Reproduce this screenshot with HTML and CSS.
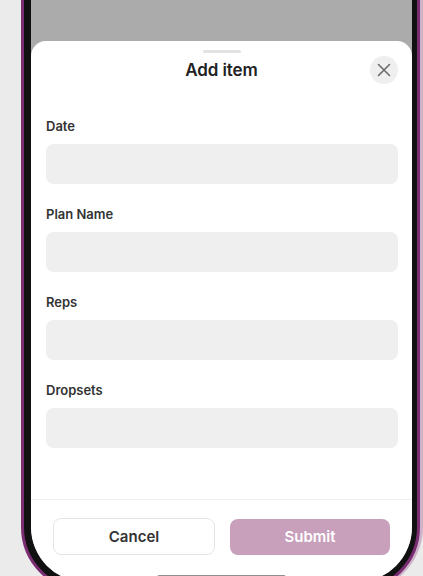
FILE: index.html
```html
<!DOCTYPE html>
<html lang="en">
<head>
	<meta charset="UTF-8">
	<title>Add item</title>
	<link rel="stylesheet" href="styles.css">
</head>
<body>
	<div class="phone">
		<div class="screen">
			<div class="sheet">
				<div class="handle"></div>
				<div class="header">
					<span class="title">Add item</span>
					<span class="close">
						<svg width="14" height="14" viewBox="0 0 14 14"><path d="M1.5 1.5L12.5 12.5M12.5 1.5L1.5 12.5" stroke="#6b6b6b" stroke-width="1.6" stroke-linecap="round" fill="none"/></svg>
					</span>
				</div>
				<div class="form">
					<div class="field"><label>Date</label><div class="input"></div></div>
					<div class="field"><label>Plan Name</label><div class="input"></div></div>
					<div class="field"><label>Reps</label><div class="input"></div></div>
					<div class="field"><label>Dropsets</label><div class="input"></div></div>
				</div>
				<div class="footer">
					<span class="btn cancel">Cancel</span>
					<span class="btn submit">Submit</span>
				</div>
			</div>
			<div class="home"></div>
		</div>
	</div>
</body>
</html>
```

FILE: styles.css
```css
html,body{margin: 0; padding: 0; height: 100%;}
body{background: #ebebeb; overflow: hidden; font-family: Inter, "Liberation Sans", sans-serif;}
.phone{box-sizing: border-box; width: 399px; height: 792px; margin: -200px 0 0 21px;
	border: 3px solid #7b2d72; border-radius: 65px;
	padding: 7px 5px 7px 7px; background: #111;
	box-shadow: 3px 0 0 #cdb3c9;
}
.screen{position: relative; height: 100%; border-radius: 55px; overflow: hidden;
	background: #ababab; padding-top: 231px; box-sizing: border-box;
	display: flex; flex-direction: column;
}
.sheet{flex: 1; background: #fff; border-radius: 15px 15px 0 0; display: flex; flex-direction: column;}
.handle{width: 38px; height: 3px; border-radius: 2px; background: #e2e2e2; margin: 9px auto 0;}
.header{height: 28px; margin-top: 3px; display: flex; align-items: center; justify-content: center; position: relative;}
.header .title{font-size: 17px; font-weight: 600; color: #222; letter-spacing: -0.1px;}
.header .close{position: absolute; right: 14px; top: 0; width: 28px; height: 28px; border-radius: 50%;
	background: #efefef; display: flex; align-items: center; justify-content: center;}
.form{flex: 1; padding: 34px 14px 0 15px; display: flex; flex-direction: column; gap: 22px;}
.field label{display: block; font-size: 13px; line-height: 16px; font-weight: 600; color: #333; margin-bottom: 10px;}
.field .input{height: 40px; border-radius: 8px; background: #efefef;}
.footer{border-top: 1px solid #f0f0f0; padding: 19px 22px 27px; display: flex; gap: 15px;}
.btn{flex: 1; height: 36px; line-height: 36px; border-radius: 8px; text-align: center;
	font-size: 15px; font-weight: 600; box-sizing: border-box;}
.btn.cancel{border: 1px solid #e4e4e4; color: #333; height: 37px; margin-top: -1px; line-height: 35px;}
.btn.submit{background: #c8a0bc; color: #fff;}
.home{position: absolute; left: 126px; top: 765px; width: 129px; height: 5px; border-radius: 3px; background: #8f8f8f;}
```
